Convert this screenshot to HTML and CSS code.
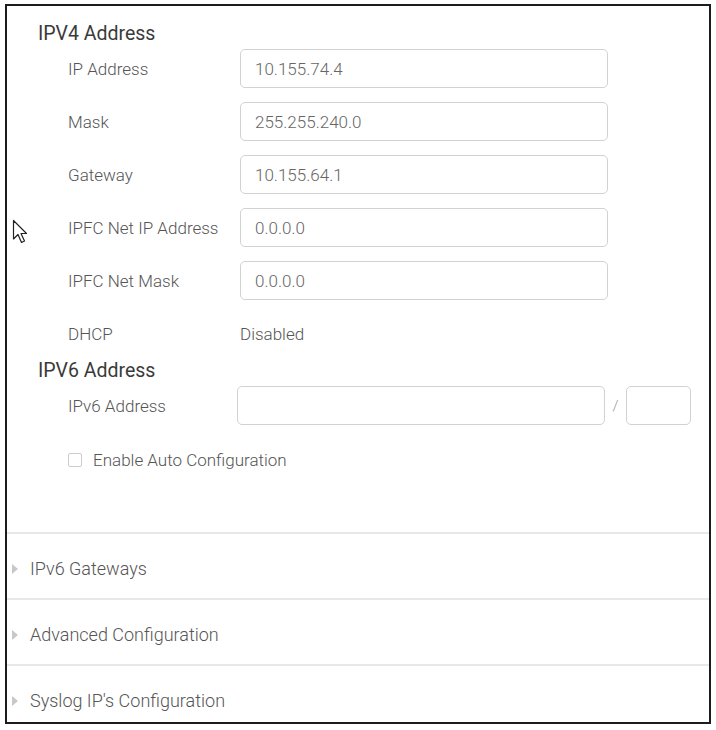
FILE: index.html
```html
<!DOCTYPE html>
<html lang="en">
<head>
  <meta charset="UTF-8" />
  <meta name="viewport" content="width=device-width, initial-scale=1.0" />
  <title>Network Settings</title>
  <link rel="stylesheet" href="styles.css">
</head>
<body>
  <div class="panel">
    <section class="addr">
      <h2>IPV4 Address</h2>
      <div class="field">
        <label>IP Address</label>
        <input class="text" type="text" value="10.155.74.4" readonly>
      </div>
      <div class="field">
        <label>Mask</label>
        <input class="text" type="text" value="255.255.240.0" readonly>
      </div>
      <div class="field">
        <label>Gateway</label>
        <input class="text" type="text" value="10.155.64.1" readonly>
      </div>
      <div class="field">
        <label>IPFC Net IP Address</label>
        <input class="text" type="text" value="0.0.0.0" readonly>
      </div>
      <div class="field">
        <label>IPFC Net Mask</label>
        <input class="text" type="text" value="0.0.0.0" readonly>
      </div>
      <div class="field last">
        <label>DHCP</label>
        <span class="value">Disabled</span>
      </div>

      <h2 class="v6-title">IPV6 Address</h2>
      <div class="field v6">
        <label>IPv6 Address</label>
        <input class="text" type="text" value="">
        <span class="slash">/</span>
        <input class="text prefix" type="text" value="">
      </div>
      <label class="check">
        <span class="box"></span>
        Enable Auto Configuration
      </label>
    </section>

    <div class="acc"><span class="tri"></span>IPv6 Gateways</div>
    <div class="acc"><span class="tri"></span>Advanced Configuration</div>
    <div class="acc"><span class="tri"></span>Syslog IP's Configuration</div>

    <!-- mouse pointer -->
    <svg class="pointer" width="16" height="25" viewBox="0 0 16 25">
      <path d="M1.5 1.5 L1.5 20 L6 15.5 L9.5 23.5 L12.5 22 L9 14.5 L14.5 14.5 Z" fill="#fff" stroke="#222" stroke-width="1.2" stroke-linejoin="round"/>
    </svg>
  </div>
</body>
</html>
```

FILE: styles.css
```css
* {
  margin: 0;
  padding: 0;
  box-sizing: border-box;
}

body {
  font-family: Roboto, "Noto Sans", sans-serif;
  font-weight: 300;
  background: #fff;
  color: #555;
}

.panel {
  position: relative;
  margin: 4px 0 0 5px;
  width: 706px;
  height: 720px;
  border: 2px solid #1c1c1c;
  overflow: hidden;
}

.addr {
  padding: 0 0 61px 31px;
}

h2 {
  font-size: 19.5px;
  font-weight: 400;
  line-height: 24px;
  color: #3a3a3a;
  margin: 16px 0 3px;
}

h2.v6-title {
  margin-top: 6px;
}

.field {
  display: flex;
  align-items: center;
  height: 39px;
  margin-bottom: 14px;
  padding-left: 30px;
  font-size: 17px;
}

.field.last {
  margin-bottom: 6px;
}

.field label {
  width: 172px;
  flex-shrink: 0;
}

.text {
  width: 368px;
  height: 39px;
  border: 1px solid #d2d2d2;
  border-radius: 5px;
  padding: 0 14px;
  font-family: inherit;
  font-weight: 300;
  font-size: 17px;
  color: #666;
  background: #fff;
  outline: none;
}

.value {
  color: #555;
}

.field.v6 {
  margin-bottom: 0;
}

.field.v6 label {
  width: 169px;
}

.slash {
  width: 21px;
  text-align: center;
  color: #999;
  font-size: 15px;
}

.text.prefix {
  width: 65px;
}

.check {
  display: flex;
  align-items: center;
  gap: 11px;
  margin: 24px 0 0 30px;
  line-height: 22px;
  font-size: 17px;
  color: #555;
}

.box {
  width: 14px;
  height: 14px;
  border: 1px solid #ccc;
  border-radius: 2px;
}

.acc {
  display: flex;
  align-items: center;
  border-top: 2px solid #e8e8e8;
  padding: 24px 0 18px 5px;
  line-height: 22px;
  font-size: 18px;
  color: #555;
}

.tri {
  width: 0;
  height: 0;
  border-top: 5px solid transparent;
  border-bottom: 5px solid transparent;
  border-left: 6px solid #c8c8c8;
  margin-right: 12px;
}

.pointer {
  position: absolute;
  left: 5px;
  top: 213px;
}
```
